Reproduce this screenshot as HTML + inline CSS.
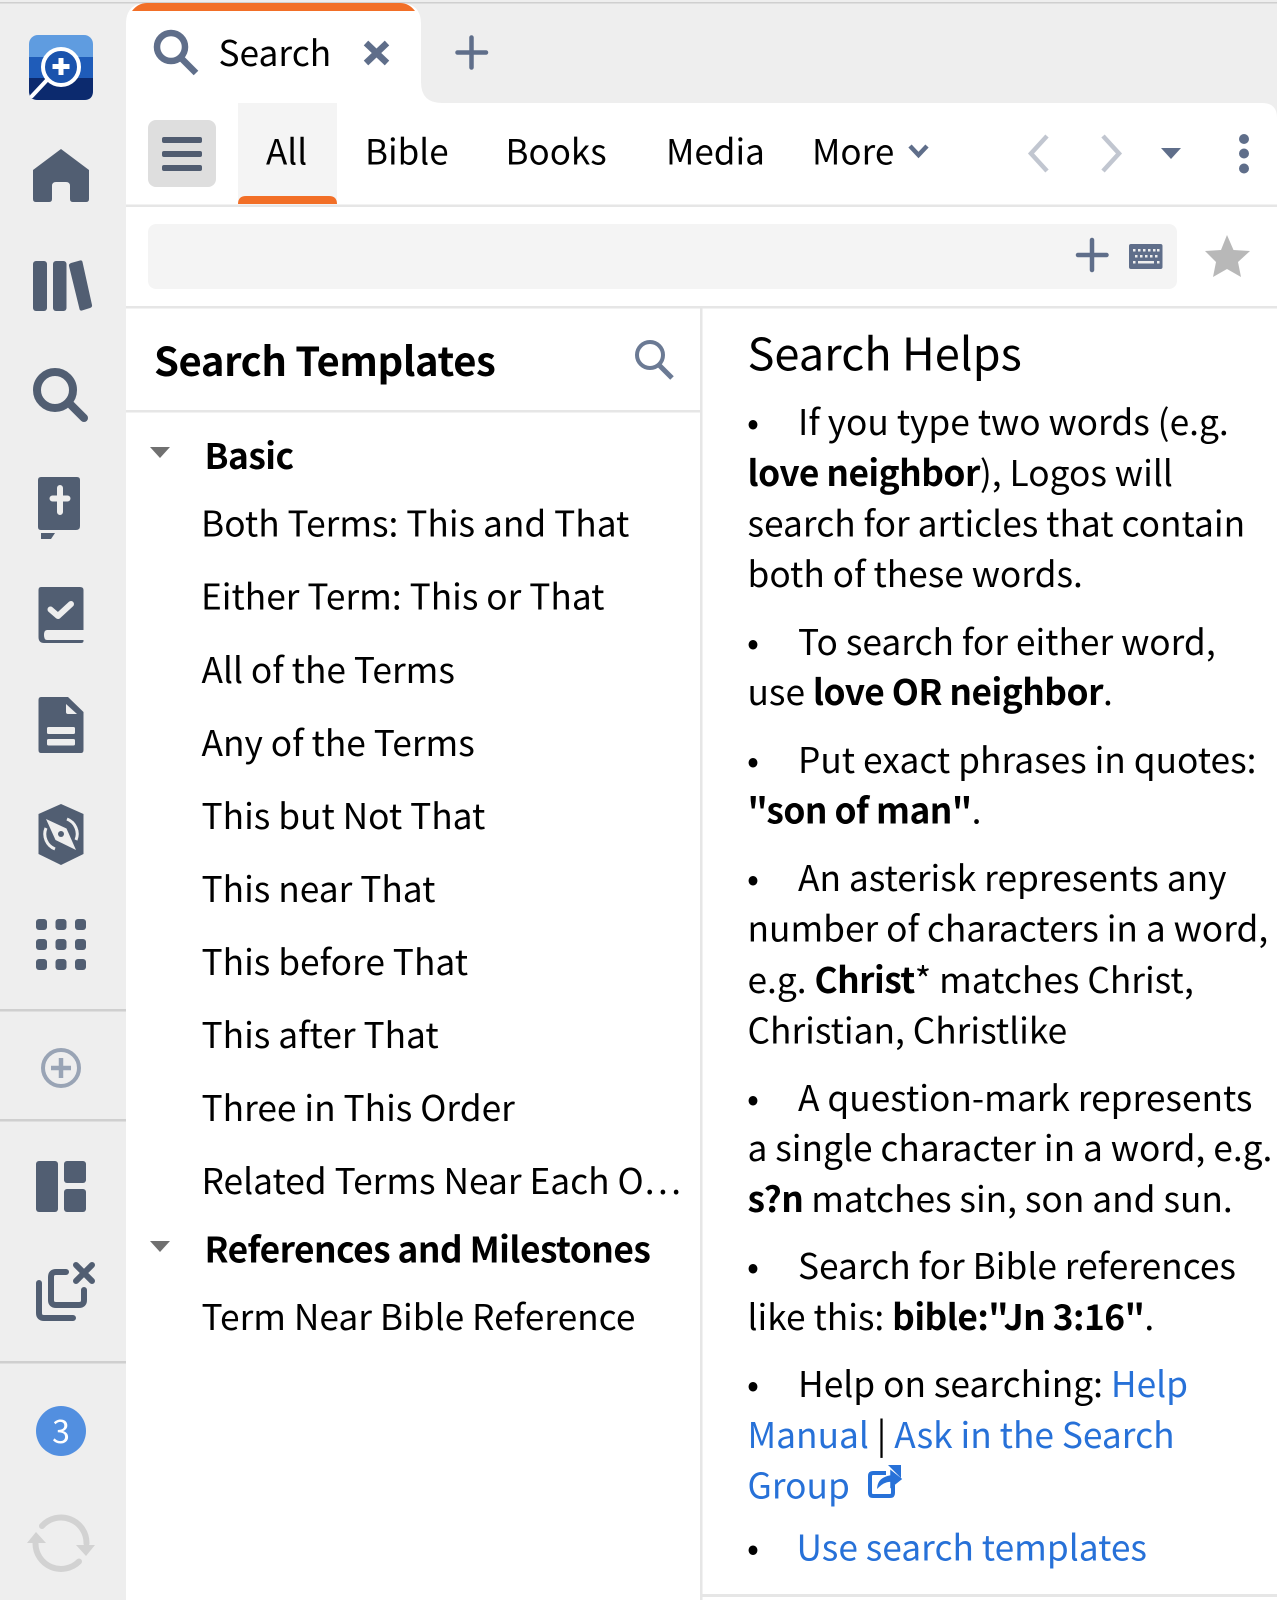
<!DOCTYPE html>
<html><head><meta charset="utf-8"><style>
html,body{margin:0;padding:0;width:1277px;height:1600px;overflow:hidden;background:#fff}
svg{position:absolute;left:0;top:0;display:block}
text{font-family:"Noto Sans CJK JP","Liberation Sans",sans-serif;fill:#000;font-size:35.3px;white-space:pre}
.b{font-weight:700;letter-spacing:-.53px}
.l{fill:#2771d8}
.t{fill:#0a0a0a}
</style></head><body>
<svg width="1277" height="1600" viewBox="0 0 1277 1600" xmlns="http://www.w3.org/2000/svg">
<rect width="1277" height="1600" fill="#fff"/>
<rect x="0" y="0" width="1277" height="103" fill="#eee"/>
<rect x="0" y="0" width="126" height="1600" fill="#eee"/>
<rect x="0" y="2" width="1277" height="1.5" fill="#cfcfcf"/>
<path d="M126 103V24Q126 3 147 3H400Q421 3 421 24V103Z" fill="#fff"/>
<path d="M421 82Q421 103 442 103H421Z" fill="#fff"/>
<path d="M1262 103Q1277 103 1277 118V103Z" fill="#eee"/>
<path d="M132 11Q138 3 147 3H400Q409 3 415 11Z" fill="#f26f27"/>
<rect x="126" y="204.500" width="1151" height="2.500" fill="#e6e6e6"/>
<rect x="126" y="306" width="1151" height="2.500" fill="#e6e6e6"/>
<rect x="126" y="410" width="574" height="2.500" fill="#e6e6e6"/>
<rect x="700" y="308" width="2.500" height="1292" fill="#e6e6e6"/>
<rect x="702" y="1594" width="575" height="3" fill="#e6e6e6"/>
<rect x="148" y="120" width="68" height="67" rx="8" fill="#dedede"/>
<g fill="#505c70"><rect x="162" y="137" width="40" height="6" rx="2"/><rect x="162" y="151" width="40" height="6" rx="2"/><rect x="162" y="165" width="40" height="6" rx="2"/></g>
<rect x="238" y="103" width="99" height="101" fill="#f4f4f4"/>
<path d="M238 204V204Q238 196 246 196H329Q337 196 337 204Z" fill="#f26f27"/>
<rect x="148" y="224" width="1029" height="65" rx="8" fill="#f4f4f4"/>
<!-- sidebar -->
<rect x="29" y="35" width="64" height="65" rx="9" fill="#5f9ce0"/>
<rect x="29" y="57" width="64" height="21" fill="#1f5cb9"/>
<path d="M29 78H93V91Q93 100 84 100H38Q29 100 29 91Z" fill="#0c2a6e"/>
<circle cx="61" cy="67" r="18" fill="#1a53ad" stroke="#fff" stroke-width="4"/>
<path d="M47 80L32 96" stroke="#fff" stroke-width="4" stroke-linecap="round"/>
<path d="M61 58V75M52.500 66.500H69.500" stroke="#fff" stroke-width="5"/>
<g fill="#515e72">
<path d="M61 149L89 170V199Q89 202 86 202H73Q70 202 70 199V186Q70 182 66 182H56Q52 182 52 186V199Q52 202 49 202H36Q33 202 33 199V170Z"/>
<rect x="33" y="261" width="14" height="50" rx="3"/>
<rect x="53" y="261" width="13.500" height="50" rx="3"/>
<path d="M69 266Q68.500 264 71 263L80 260.500Q82 260 82.500 262L92 305Q92.500 307 90 308L82 310.500Q80 311 79.500 309Z"/>
<path d="M38 480Q38 477 41 477H77Q80 477 80 480V526Q80 530 76 530H41Q38 530 38 527Z"/>
<path d="M41 533H55L51 539H41Z"/>
<path d="M41 587H80Q83.500 587 83.500 590V630H47Q44 630 44 635T47 640H83.500V641Q83.500 643 81 643H44Q38.500 643 38.500 637V590Q38.500 587 41 587Z"/>
<path d="M41 697H68L83.500 712V750Q83.500 753 81 753H41Q38.500 753 38.500 750V700Q38.500 697 41 697Z"/>
<path d="M61 804L83.500 814V854L61 865L38.500 854V814Z"/>
<rect x="36" y="919" width="11" height="11" rx="3"/><rect x="55.500" y="919" width="11" height="11" rx="3"/><rect x="75" y="919" width="11" height="11" rx="3"/>
<rect x="36" y="939" width="11" height="11" rx="3"/><rect x="55.500" y="939" width="11" height="11" rx="3"/><rect x="75" y="939" width="11" height="11" rx="3"/>
<rect x="36" y="959" width="11" height="11" rx="3"/><rect x="55.500" y="959" width="11" height="11" rx="3"/><rect x="75" y="959" width="11" height="11" rx="3"/>
<rect x="36" y="1161" width="22" height="51" rx="3"/><rect x="64" y="1161" width="22" height="22" rx="3"/><rect x="64" y="1189" width="22" height="23" rx="3"/>
</g>
<circle cx="55" cy="390" r="18" fill="none" stroke="#515e72" stroke-width="8"/>
<path d="M71 405L84 418" stroke="#515e72" stroke-width="8" stroke-linecap="round"/>
<path d="M60 488V512M52.500 498.500H67.500" stroke="#eee" stroke-width="6" stroke-linecap="round"/>
<path d="M50.500 609.500L58 616L71 604" fill="none" stroke="#eee" stroke-width="6" stroke-linecap="round" stroke-linejoin="round"/>
<path d="M66 704V712Q66 714 68 714H77Z" fill="#eee"/>
<rect x="47" y="727" width="28" height="7" rx="1.500" fill="#eee"/><rect x="47" y="739" width="28" height="6.500" rx="1.500" fill="#eee"/>
<path d="M46 819L66.500 828.500L76 850L55.500 840Z" fill="#eee"/>
<circle cx="61" cy="834" r="3" fill="#515e72"/>
<path d="M67 819A16 16 0 0 1 76 840M46 828A16 16 0 0 0 55 849" fill="none" stroke="#eee" stroke-width="3"/>
<rect x="0" y="1009" width="126" height="2.500" fill="#cfcfcf"/>
<circle cx="61" cy="1068" r="18" fill="none" stroke="#99a4b5" stroke-width="4"/>
<path d="M51 1068H71M61 1058V1078" stroke="#99a4b5" stroke-width="4.500"/>
<rect x="0" y="1119" width="126" height="2.500" fill="#cfcfcf"/>
<path d="M39 1283V1313Q39 1318 44 1318H73" fill="none" stroke="#515e72" stroke-width="6" stroke-linecap="round"/>
<path d="M66 1272H56Q51 1272 51 1277V1300Q51 1305 56 1305H79Q84 1305 84 1300V1290" fill="none" stroke="#515e72" stroke-width="6" stroke-linecap="round"/>
<path d="M76 1265L92 1281M92 1265L76 1281" stroke="#515e72" stroke-width="6" stroke-linecap="round"/>
<rect x="0" y="1361" width="126" height="2.500" fill="#cfcfcf"/>
<circle cx="61" cy="1431" r="25" fill="#528fe0"/>
<text x="61" y="1443" text-anchor="middle" style="font-size:32px;fill:#fff">3</text>
<path d="M42 1526A25.500 25.500 0 0 1 86.500 1543.500M35.500 1543.500A25.500 25.500 0 0 0 79 1561.500" fill="none" stroke="#d2d2d2" stroke-width="6" stroke-linecap="round"/>
<path d="M36 1532L46 1543H27ZM86 1556L76 1545H95Z" fill="#d2d2d2"/>
<!-- tab -->
<circle cx="171" cy="47" r="14" fill="none" stroke="#5f6e8a" stroke-width="6.500"/>
<path d="M182 59L196 73" stroke="#5f6e8a" stroke-width="6.500"/>
<text x="218.500" y="66">Search</text>
<path d="M366 43L387 63M387 43L366 63" stroke="#5f6e8a" stroke-width="6.500"/>
<path d="M471.500 37.500V67.500M457.500 52.500H486" stroke="#5f6e8a" stroke-width="4.500" stroke-linecap="round"/>
<!-- nav -->
<text x="266" y="164.500" style="font-size:35px">All</text>
<text x="365" y="164.500" style="font-size:35px">Bible</text>
<text x="505.500" y="164.500" style="font-size:35px">Books</text>
<text x="666" y="164.500" style="font-size:35px">Media</text>
<text x="812" y="164.500" style="font-size:35px">More</text>
<path d="M910 146L918.500 155L927 146" fill="none" stroke="#5f6e8a" stroke-width="4.500"/>
<path d="M1047 136L1031 153.500L1047 171" fill="none" stroke="#c1c6d0" stroke-width="4.500"/>
<path d="M1103 136L1119 153.500L1103 171" fill="none" stroke="#c1c6d0" stroke-width="4.500"/>
<path d="M1161 148H1181L1171 159Z" fill="#5f6e8a"/>
<g fill="#5f6e8a"><circle cx="1244" cy="139" r="5"/><circle cx="1244" cy="153.500" r="5"/><circle cx="1244" cy="168.500" r="5"/></g>
<path d="M1092 240V270M1078 255H1106.500" stroke="#5f6e8a" stroke-width="4.500" stroke-linecap="round"/>
<rect x="1129" y="244" width="33.500" height="25" rx="2" fill="#5f6e8a"/>
<g fill="#eee">
<rect x="1133" y="249" width="2.500" height="2.500"/><rect x="1138" y="249" width="2.500" height="2.500"/><rect x="1143" y="249" width="2.500" height="2.500"/><rect x="1148" y="249" width="2.500" height="2.500"/><rect x="1153" y="249" width="2.500" height="2.500"/><rect x="1157" y="249" width="2.500" height="2.500"/>
<rect x="1135" y="255" width="2.500" height="2.500"/><rect x="1140" y="255" width="2.500" height="2.500"/><rect x="1145" y="255" width="2.500" height="2.500"/><rect x="1150" y="255" width="2.500" height="2.500"/><rect x="1155" y="255" width="2.500" height="2.500"/>
<rect x="1133" y="261" width="2.500" height="2.500"/><rect x="1138" y="261" width="16" height="2.500"/><rect x="1157" y="261" width="2.500" height="2.500"/></g>
<path d="M1227 235L1233.500 250L1250 251L1238 262L1241 277L1227 269L1213 277L1216 262L1205 251L1221 250Z" fill="#b8b8b8"/>
<!-- left pane -->
<text x="154" y="376" class="b" style="font-size:40px;letter-spacing:-.4px">Search Templates</text>
<circle cx="650" cy="355" r="13" fill="none" stroke="#6b7a94" stroke-width="4"/>
<path d="M659 365L672 378" stroke="#6b7a94" stroke-width="5"/>
<path d="M150 447H170L160 458Z" fill="#707070"/>
<text x="204.500" y="469" class="b">Basic</text>
<g class="t">
<text x="201" y="536.500">Both Terms: This and That</text>
<text x="201" y="609.500">Either Term: This or That</text>
<text x="201.500" y="683">All of the Terms</text>
<text x="201.500" y="756">Any of the Terms</text>
<text x="201.500" y="829">This but Not That</text>
<text x="201.500" y="902">This near That</text>
<text x="201.500" y="975">This before That</text>
<text x="201.500" y="1048">This after That</text>
<text x="201.500" y="1121">Three in This Order</text>
<text x="201.500" y="1194">Related Terms Near Each O…</text>
</g>
<path d="M150 1241H170L160 1252Z" fill="#707070"/>
<text x="204.500" y="1262.500" class="b">References and Milestones</text>
<text x="201.500" y="1330">Term Near Bible Reference</text>
<!-- right pane -->
<text x="747.500" y="370.500" style="font-size:45.2px">Search Helps</text>
<text x="747" y="435">•</text><text x="798" y="435">If you type two words (e.g.</text>
<text x="747.500" y="486"><tspan class="b">love neighbor</tspan>), Logos will</text>
<text x="747.500" y="536.500">search for articles that contain</text>
<text x="747.500" y="587">both of these words.</text>
<text x="747" y="655">•</text><text x="798" y="655">To search for either word,</text>
<text x="747.500" y="705">use <tspan class="b">love OR neighbor</tspan>.</text>
<text x="747" y="773">•</text><text x="798" y="773">Put exact phrases in quotes:</text>
<text x="747.500" y="823.500"><tspan class="b">"son of man"</tspan>.</text>
<text x="747" y="891">•</text><text x="798" y="891">An asterisk represents any</text>
<text x="747.500" y="941.500">number of characters in a word,</text>
<text x="747.500" y="993">e.g. <tspan class="b">Christ</tspan>* matches Christ,</text>
<text x="747.500" y="1043.500">Christian, Christlike</text>
<text x="747" y="1111">•</text><text x="798" y="1111">A question-mark represents</text>
<text x="747.500" y="1161">a single character in a word, e.g.</text>
<text x="747.500" y="1212"><tspan class="b">s?n</tspan> matches sin, son and sun.</text>
<text x="747" y="1279">•</text><text x="798" y="1279">Search for Bible references</text>
<text x="747.500" y="1330">like this: <tspan class="b">bible:"Jn 3:16"</tspan>.</text>
<text x="747" y="1397">•</text><text x="798" y="1397">Help on searching: <tspan class="l">Help</tspan></text>
<text x="747.500" y="1448"><tspan class="l">Manual</tspan> | <tspan class="l">Ask in the Search</tspan></text>
<text x="747.500" y="1498.500" class="l">Group</text>
<text x="747" y="1560.500">•</text><text x="796.500" y="1560.500" class="l">Use search templates</text>
<path d="M886 1473H873Q870 1473 870 1476V1493Q870 1496 873 1496H890Q893 1496 893 1493V1485" fill="none" stroke="#2771d8" stroke-width="4"/>
<path d="M878 1487Q879 1478 891 1476V1471L901 1479 891 1487V1481Q884 1481 878 1487Z" fill="#2771d8" stroke="#2771d8" stroke-width="1.500"/>
<path d="M888 1465H901V1478Z" fill="#2771d8"/>
</svg>
</body></html>
